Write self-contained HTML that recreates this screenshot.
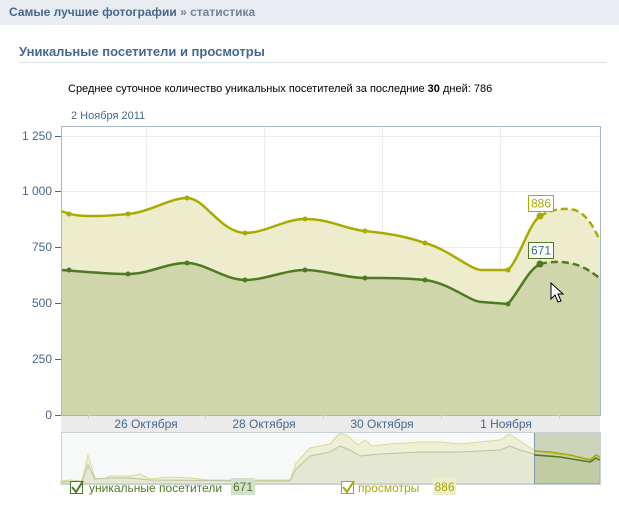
<!DOCTYPE html>
<html><head><meta charset="utf-8"><style>
body{margin:0;width:619px;height:515px;background:#fff;font-family:"Liberation Sans","DejaVu Sans",sans-serif;position:relative;overflow:hidden}
.hdr{position:absolute;left:0;top:0;width:619px;height:25px;background:#e9edf1;font-size:12px;font-weight:bold;color:#45688e;line-height:25px;padding-left:9px;box-sizing:border-box}
.hdr span{color:#6f8396}
.h2{position:absolute;left:19px;top:44px;width:587px;font-size:13px;font-weight:bold;color:#45688e;border-bottom:1px solid #dae1e8;padding-bottom:3px}
.t{position:absolute;font-size:11px;color:#000}
svg{position:absolute;left:0;top:0}
</style></head><body>
<div class="hdr">Самые лучшие фотографии <span>» статистика</span></div>
<div class="h2">Уникальные посетители и просмотры</div>
<div class="t" style="left:68px;top:83px">Среднее суточное количество уникальных посетителей за последние <b>30</b> дней: 786</div>
<div class="t" style="left:71px;top:110px;color:#45688e">2 Ноября 2011</div>
<svg width="619" height="515" font-family="Liberation Sans, sans-serif" font-size="11">
<rect x="61" y="415" width="539" height="17" fill="#ebebeb"/>
<g stroke="#ececec" stroke-width="1">
<line x1="61" y1="136.5" x2="600" y2="136.5"/><line x1="61" y1="191.5" x2="600" y2="191.5"/><line x1="61" y1="247.5" x2="600" y2="247.5"/><line x1="61" y1="303.5" x2="600" y2="303.5"/><line x1="61" y1="359.5" x2="600" y2="359.5"/>
<line x1="146.5" y1="126" x2="146.5" y2="415"/><line x1="264.5" y1="126" x2="264.5" y2="415"/><line x1="382.5" y1="126" x2="382.5" y2="415"/><line x1="500.5" y1="126" x2="500.5" y2="415"/>
</g>
<path d="M61,211 C75,216 80,216 95,216 C110,216 115,215 128,214 C150,212 170,198 187,198 C205,198 220,232 245,233 C265,233 285,219 305,219 C330,219 345,229 365,231 C395,234 410,238 425,243 C450,250 470,270 482,270 L508,270 C520,258 528,225 540,216 C555,208 565,208 575,210 C590,216 595,232 600,240 L600,415 L61,415Z" fill="#ededcd"/>
<path d="M61,270 C90,272 110,274 128,274 C150,274 165,263 187,263 C205,263 225,280 245,280 C265,280 285,270 305,270 C325,270 345,278 365,278 C390,278 405,278 425,280 C450,283 470,302 482,302 L508,304 C520,290 528,270 540,264 C555,260 570,262 580,266 C590,270 596,276 600,278 L600,415 L61,415Z" fill="#cfd6ac"/>
<g fill="none" stroke-width="2.5">
<path d="M61,211 C75,216 80,216 95,216 C110,216 115,215 128,214 C150,212 170,198 187,198 C205,198 220,232 245,233 C265,233 285,219 305,219 C330,219 345,229 365,231 C395,234 410,238 425,243 C450,250 470,270 482,270 L508,270 C520,258 528,225 540,216" stroke="#aaaa00"/>
<path d="M540,216 C555,208 565,208 575,210 C590,216 595,232 600,240" stroke="#aaaa00" stroke-dasharray="7,4"/>
<path d="M61,270 C90,272 110,274 128,274 C150,274 165,263 187,263 C205,263 225,280 245,280 C265,280 285,270 305,270 C325,270 345,278 365,278 C390,278 405,278 425,280 C450,283 470,302 482,302 L508,304 C520,290 528,270 540,264" stroke="#4e7a22"/>
<path d="M540,264 C555,260 570,262 580,266 C590,270 596,276 600,278" stroke="#4e7a22" stroke-dasharray="7,4"/>
</g>
<g fill="#aaaa00"><circle cx="69" cy="214" r="2.5"/><circle cx="128" cy="214" r="2.5"/><circle cx="187" cy="198" r="2.5"/><circle cx="245" cy="233" r="2.5"/><circle cx="305" cy="219" r="2.5"/><circle cx="365" cy="231" r="2.5"/><circle cx="425" cy="243" r="2.5"/><circle cx="508" cy="270" r="2.5"/><circle cx="540" cy="216" r="3.5"/></g>
<g fill="#4e7a22"><circle cx="69" cy="270" r="2.5"/><circle cx="128" cy="274" r="2.5"/><circle cx="187" cy="263" r="2.5"/><circle cx="245" cy="280" r="2.5"/><circle cx="305" cy="270" r="2.5"/><circle cx="365" cy="278" r="2.5"/><circle cx="425" cy="280" r="2.5"/><circle cx="508" cy="304" r="2.5"/><circle cx="540" cy="264" r="3.5"/></g>
<rect x="528.5" y="195.5" width="25" height="16" fill="#fff" stroke="#aaaa00"/><text x="541" y="207.5" text-anchor="middle" fill="#aaaa00" font-size="12">886</text>
<rect x="528.5" y="242.5" width="25" height="16" fill="#fff" stroke="#4e7a22"/><text x="541" y="254.5" text-anchor="middle" fill="#3d6a7a" font-size="12">671</text>
<path d="M551,283 L551,299 L555,295 L558,302 L561,301 L558,294 L563,294Z" fill="#fff" stroke="#000" stroke-width="1"/>
<rect x="61.5" y="126.5" width="539" height="289" fill="none" stroke="#a8b8cc"/>
<g fill="#45688e" text-anchor="end" font-size="12"><text x="52" y="140">1 250</text><text x="52" y="195">1 000</text><text x="52" y="251">750</text><text x="52" y="307">500</text><text x="52" y="363">250</text><text x="52" y="419">0</text></g>
<g stroke="#45688e"><line x1="55" y1="136.5" x2="61" y2="136.5"/><line x1="55" y1="191.5" x2="61" y2="191.5"/><line x1="55" y1="247.5" x2="61" y2="247.5"/><line x1="55" y1="303.5" x2="61" y2="303.5"/><line x1="55" y1="359.5" x2="61" y2="359.5"/><line x1="55" y1="415.5" x2="61" y2="415.5"/></g>
<g stroke="#d0d0d0"><line x1="88.5" y1="415" x2="88.5" y2="419"/><line x1="205.5" y1="415" x2="205.5" y2="419"/><line x1="323.5" y1="415" x2="323.5" y2="419"/><line x1="441.5" y1="415" x2="441.5" y2="419"/><line x1="559.5" y1="415" x2="559.5" y2="419"/></g>
<g fill="#45688e" text-anchor="middle" font-size="12"><text x="146" y="428">26 Октября</text><text x="264" y="428">28 Октября</text><text x="382" y="428">30 Октября</text><text x="506" y="428">1 Ноября</text></g>
<rect x="61" y="433" width="539" height="51" fill="#f7f8f8"/>
<path d="M61,481 L70,480 L82,481 L88,455 L95,478 L102,480 L110,476 L130,476 L140,474 L150,479 L170,477 L190,478 L210,480 L270,480 L290,480 L296,463 L310,448 L330,444 L340,433 L348,436 L358,445 L365,440 L372,446 L390,444 L420,442 L440,442 L460,444 L480,442 L500,440 L510,434 L520,441 L534,450 L550,454 L570,455 L590,459 L596,455 L600,458 L600,484 L61,484Z" fill="#eeefd6" stroke="#d8dc98"/>
<path d="M61,482 L82,481 L88,465 L95,479 L110,478 L130,478 L150,480 L270,481 L290,481 L296,469 L310,456 L330,452 L340,446 L350,450 L360,456 L380,454 L420,452 L460,452 L500,450 L510,446 L520,450 L534,454 L560,457 L590,462 L600,460 L600,484 L61,484Z" fill="#e4e8d2" stroke="#b8c4a0"/>
<rect x="534.5" y="432.5" width="66" height="51.5" fill="rgba(150,170,110,0.45)" stroke="#7f97b2"/>
<path d="M534,451 L550,452 L570,455 L590,460 L596,455 L600,457" fill="none" stroke="#aaaa00" stroke-width="1.5"/>
<path d="M534,455 L560,457 L590,462 L596,458 L600,460" fill="none" stroke="#4e7a22" stroke-width="1.5"/>
<rect x="61.5" y="432.5" width="539" height="52" fill="none" stroke="#c8d0d8"/>
<rect x="70.5" y="481.5" width="12" height="12" fill="#fff" stroke="#4e7a22"/>
<path d="M72,487 L76,492 L83,481" fill="none" stroke="#4e7a22" stroke-width="2"/>
<text x="89" y="492" fill="#4e7a22" font-size="12">уникальные посетители</text>
<rect x="231" y="478" width="24" height="17" fill="#d5e0cc"/><text x="243" y="491" text-anchor="middle" fill="#4e7a22" font-size="12">671</text>
<rect x="341.5" y="481.5" width="12" height="12" fill="#fff" stroke="#aaaa00"/>
<path d="M343,487 L347,492 L354,481" fill="none" stroke="#aaaa00" stroke-width="2"/>
<text x="358" y="492" fill="#aaaa00" font-size="12">просмотры</text>
<rect x="433" y="478" width="23" height="17" fill="#eeeecc"/><text x="444.5" y="491" text-anchor="middle" fill="#aaaa00" font-size="12">886</text>
</svg>
</body></html>
